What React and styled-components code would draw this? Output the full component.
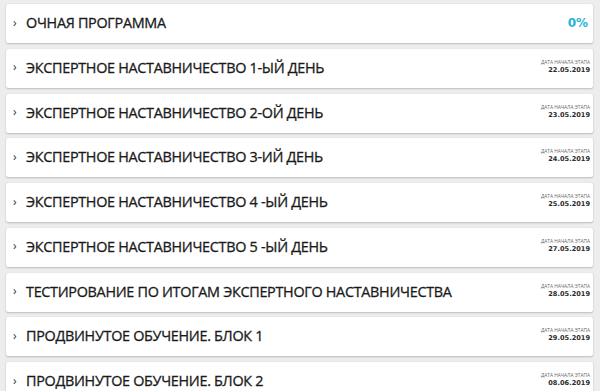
import React from 'react'
import styled, { createGlobalStyle } from 'styled-components'

const GlobalStyle = createGlobalStyle`
  body {
    margin: 0;
    background: #ededed;
    font-family: "Open Sans", "Liberation Sans", sans-serif;
  }
`

const stages = [
  { title: 'ЭКСПЕРТНОЕ НАСТАВНИЧЕСТВО 1-ЫЙ ДЕНЬ', date: '22.05.2019' },
  { title: 'ЭКСПЕРТНОЕ НАСТАВНИЧЕСТВО 2-ОЙ ДЕНЬ', date: '23.05.2019' },
  { title: 'ЭКСПЕРТНОЕ НАСТАВНИЧЕСТВО 3-ИЙ ДЕНЬ', date: '24.05.2019' },
  { title: 'ЭКСПЕРТНОЕ НАСТАВНИЧЕСТВО 4 -ЫЙ ДЕНЬ', date: '25.05.2019' },
  { title: 'ЭКСПЕРТНОЕ НАСТАВНИЧЕСТВО 5 -ЫЙ ДЕНЬ', date: '27.05.2019' },
  { title: 'ТЕСТИРОВАНИЕ ПО ИТОГАМ ЭКСПЕРТНОГО НАСТАВНИЧЕСТВА', date: '28.05.2019' },
  { title: 'ПРОДВИНУТОЕ ОБУЧЕНИЕ. БЛОК 1', date: '29.05.2019' },
  { title: 'ПРОДВИНУТОЕ ОБУЧЕНИЕ. БЛОК 2', date: '08.06.2019' },
]

export default function App() {
  return (
    <>
      <GlobalStyle />
      <List>
        <Card>
          <Chevron>›</Chevron>
          <Title>ОЧНАЯ ПРОГРАММА</Title>
          <Percent>0%</Percent>
        </Card>
        {stages.map(s => (
          <Card key={s.title}>
            <Chevron>›</Chevron>
            <Title>{s.title}</Title>
            <DateBox>
              <DateLabel>ДАТА НАЧАЛА ЭТАПА</DateLabel>
              <DateValue>{s.date}</DateValue>
            </DateBox>
          </Card>
        ))}
      </List>
    </>
  )
}

const List = styled.div`
  display: flex;
  flex-direction: column;
  gap: 5.75px;
  padding: 4px 7px 0 6px;
`

const Card = styled.div`
  display: flex;
  align-items: center;
  height: 39px;
  box-sizing: border-box;
  padding: 0 3px 0 7px;
  background: #fff;
  border-radius: 2px;
  box-shadow: 0 1px 2px rgba(0, 0, 0, 0.2), 0 0 1px rgba(0, 0, 0, 0.15);
`

const Chevron = styled.span`
  font-size: 12px;
  color: #333;
  width: 13px;
  margin-top: -3px;
`

const Title = styled.div`
  flex: 1;
  font-size: 14.4px;
  font-weight: 400;
  color: #1a1a1a;
  letter-spacing: -0.3px;
  -webkit-text-stroke: 0.3px #1a1a1a;
  white-space: nowrap;
  margin-top: -2px;
`

const Percent = styled.div`
  font-family: "DejaVu Sans", sans-serif;
  font-size: 12px;
  font-weight: 700;
  color: #1fb3d8;
  margin-right: 2px;
  margin-top: -2px;
`

const DateBox = styled.div`
  display: flex;
  flex-direction: column;
  align-items: flex-end;
  margin-top: -4px;
`

const DateLabel = styled.div`
  font-size: 4.8px;
  color: #666;
  line-height: 7px;
`

const DateValue = styled.div`
  font-family: "DejaVu Sans", sans-serif;
  font-size: 6.6px;
  font-weight: 700;
  color: #2a2a2a;
  line-height: 8px;
`
